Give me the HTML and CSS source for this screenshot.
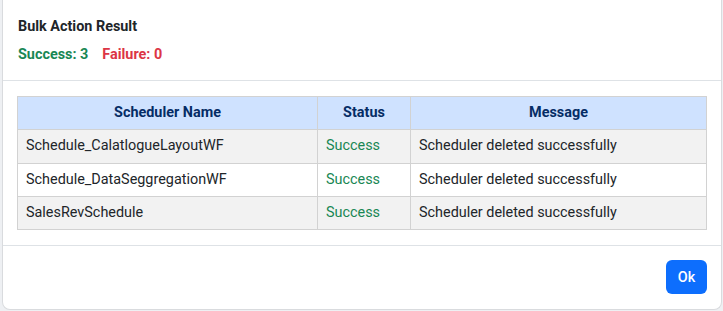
FILE: index.html
```html
<!DOCTYPE html>
<html lang="en">
<head>
  <meta charset="UTF-8">
  <title>Bulk Action Result</title>
  <link rel="stylesheet" href="styles.css">
</head>
<body>

  <div class="modal">
    <div class="modal-header">
      <h5 class="modal-title">Bulk Action Result</h5>
      <div class="counts">
        <span class="count-success">Success: 3</span>
        <span class="count-failure">Failure: 0</span>
      </div>
    </div>

    <div class="modal-body">
      <table class="result-table">
        <colgroup>
          <col class="col-name">
          <col class="col-status">
          <col>
        </colgroup>
        <thead>
          <tr>
            <th>Scheduler Name</th>
            <th>Status</th>
            <th>Message</th>
          </tr>
        </thead>
        <tbody>
          <tr>
            <td>Schedule_CalatlogueLayoutWF</td>
            <td class="status-ok">Success</td>
            <td>Scheduler deleted successfully</td>
          </tr>
          <tr>
            <td>Schedule_DataSeggregationWF</td>
            <td class="status-ok">Success</td>
            <td>Scheduler deleted successfully</td>
          </tr>
          <tr>
            <td>SalesRevSchedule</td>
            <td class="status-ok">Success</td>
            <td>Scheduler deleted successfully</td>
          </tr>
        </tbody>
      </table>
    </div>

    <div class="modal-footer">
      <button class="btn-ok" type="button">Ok</button>
    </div>
  </div>

</body>
</html>
```

FILE: styles.css
```css
body {
  margin: 0;
  padding: 0 0 0 2px;
  font-family: Roboto, "Liberation Sans", Arial, sans-serif;
  font-size: 14.4px;
  color: #212529;
  background: #eef0f3;
}

.modal {
  width: 720px;
  box-sizing: border-box;
  background: #fff;
  border: 1px solid #d9dbde;
  border-top: none;
  border-radius: 0 0 8px 8px;
}

.modal-header {
  padding: 16px 15px 15px;
  border-bottom: 1px solid #dee2e6;
}

.modal-title {
  margin: 0 0 7px;
  font-size: 14.4px;
  font-weight: 700;
  line-height: 21px;
  color: #212529;
}

.counts {
  display: flex;
  gap: 14px;
  font-weight: 700;
  line-height: 21px;
}

.count-success {
  color: #198754;
}

.count-failure {
  color: #dc3545;
}

.modal-body {
  padding: 15px 14px;
}

.result-table {
  width: 100%;
  border-collapse: collapse;
  table-layout: fixed;
}

.col-name {
  width: 300px;
}

.col-status {
  width: 93px;
}

.result-table th,
.result-table td {
  padding: 8px;
  border: 1px solid #d2d2d2;
  line-height: 16.3px;
  text-align: left;
}

.result-table th {
  background: #cfe2ff;
  color: #052c65;
  font-weight: 700;
  text-align: center;
}

.result-table tbody tr:nth-child(odd) td {
  background: #f2f2f2;
}

.status-ok {
  color: #198754;
}

.modal-footer {
  display: flex;
  justify-content: flex-end;
  padding: 14px 14px 15px;
  border-top: 1px solid #dee2e6;
}

.btn-ok {
  width: 41px;
  height: 34px;
  padding: 0;
  border: none;
  border-radius: 6px;
  background: #0d6efd;
  color: #fff;
  font-family: inherit;
  font-size: 14.4px;
  font-weight: 500;
}
```
